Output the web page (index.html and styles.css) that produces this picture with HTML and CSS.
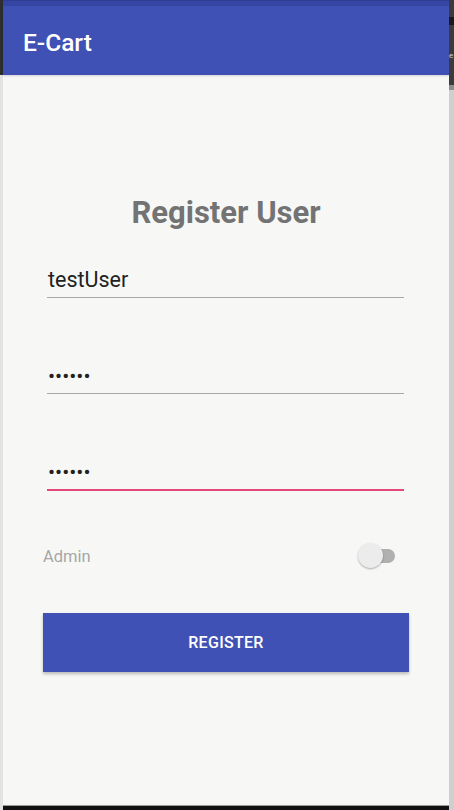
FILE: index.html
```html
<!DOCTYPE html>
<html>
<head>
<meta charset="utf-8">
<link rel="stylesheet" href="styles.css">
</head>
<body>
<div class="frame">
  <div class="edge-left"></div>
  <div class="app">
    <div class="statusbar"></div>
    <header class="appbar"><span class="title">E-Cart</span></header>
    <main class="content">
      <h1 class="heading">Register User</h1>
      <div class="field"><span class="value">testUser</span></div>
      <div class="field"><span class="dots">••••••</span></div>
      <div class="field focused"><span class="dots">••••••</span></div>
      <div class="admin-row">
        <span class="admin-label">Admin</span>
        <span class="switch"><span class="track"></span><span class="thumb"></span></span>
      </div>
      <button class="register">REGISTER</button>
    </main>
    <div class="navline"></div>
  </div>
  <div class="edge-right"><span class="peek">e</span></div>
</div>
</body>
</html>
```
FILE: styles.css
```css
html, body { margin: 0; padding: 0; }
body { width: 454px; height: 810px; overflow: hidden; background: #111; font-family: Roboto, "Noto Sans", sans-serif; }
.frame { display: flex; width: 454px; height: 810px; }
.edge-left { width: 3px; background: linear-gradient(#2e2e2e 0 75px, #e3e3e3 75px); }
.edge-right { width: 5px; background: linear-gradient(#3b3b3b 0 17px, #1a1a1a 17px 25px, #3b3b3b 25px 85px, #8d8d8d 85px 90px, #cfcfcf 90px); overflow: hidden; position: relative; }
.peek { position: absolute; left: 0; top: 50px; color: #cfcfcf; font-size: 8px; line-height: 12px; }
.app { flex: 1; display: flex; flex-direction: column; background: #f7f8f6; }
.statusbar { height: 6px; background: #3545a3; border-top: 1px solid #2f3d92; box-sizing: border-box; }
.appbar { height: 69px; background: #3f51b5; display: flex; align-items: center; padding-left: 20px; box-shadow: 0 1px 2px rgba(0,0,0,0.15); }
.title { color: #fff; font-size: 24.5px; font-weight: 500; margin-top: 4px; }
.content { flex: 1; display: flex; flex-direction: column; padding: 0 40px 0 40px; }
.heading { margin: 121px 0 0 0; text-align: center; color: #737373; font-size: 31px; font-weight: 700; line-height: 34px; }
.field { margin: 30px 5px 0 4px; height: 38px; border-bottom: 1.5px solid #a8a8a8; display: flex; align-items: flex-end; padding: 0 1px 5px; box-sizing: border-box; }
.field + .field { margin-top: 58px; }
.field.focused { border-bottom: 2px solid #e5497a; margin-top: 59px; }
.value { font-size: 21.5px; color: #222; line-height: 24px; }
.dots { font-size: 21px; color: #222; line-height: 18px; margin-bottom: 3px; }
.admin-row { display: flex; justify-content: space-between; align-items: center; margin-top: 50px; height: 30px; padding-right: 10px; }
.admin-label { color: #a6a6a6; font-size: 16.5px; }
.switch { position: relative; width: 38px; height: 26px; display: block; }
.track { position: absolute; left: 4px; top: 6px; width: 30px; height: 14px; border-radius: 7px; background: #b0b0b0; }
.thumb { position: absolute; left: -3px; top: 0px; width: 25px; height: 25px; border-radius: 50%; background: #ececec; box-shadow: 0 1px 2px rgba(0,0,0,0.3); }
.register { margin-top: 42px; height: 59px; border: none; background: #3f51b5; color: #fff; font-family: Roboto, sans-serif; font-size: 16px; font-weight: 500; letter-spacing: 0.3px; box-shadow: 0 2px 3px rgba(0,0,0,0.25); }
.navline { height: 5px; background: linear-gradient(#9a9a9a 0 1px, #111 1px); }
```
